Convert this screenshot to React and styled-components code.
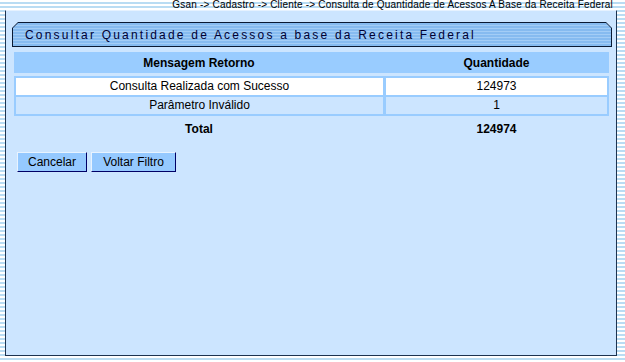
import React from "react";
import styled, { createGlobalStyle } from "styled-components";

const Global = createGlobalStyle`
  html, body {
    margin: 0;
    padding: 0;
  }
  body {
    width: 625px;
    height: 362px;
    overflow: hidden;
    font-family: "Liberation Sans", Arial, sans-serif;
    background: repeating-linear-gradient(
      to bottom,
      #ffffff 0px,
      #ffffff 2px,
      #b9dcf3 2px,
      #b9dcf3 4px
    );
  }
`;

const Trilha = styled.div`
  height: 10px;
  line-height: 10px;
  font-size: 10px;
  letter-spacing: 0.2px;
  text-align: right;
  padding-right: 12px;
  color: #000;
  white-space: nowrap;
`;

const Painel = styled.div`
  margin: 0 8px 0 5px;
  height: 346px;
  background: #cce5ff;
  border: 1px solid #1d3350;
  border-top-color: #e6f2ff;
  padding: 11px 0 0 6px;
  box-sizing: border-box;
  display: flex;
  flex-direction: column;
`;

const BarraBorda = styled.div`
  width: 600px;
  height: 25px;
  background: #0a1a33;
  clip-path: polygon(6px 0, 594px 0, 600px 6px, 600px 100%, 0 100%, 0 6px);
  padding: 1px;
  box-sizing: border-box;
`;

const Barra = styled.div`
  height: 100%;
  clip-path: polygon(5px 0, 593px 0, 598px 5px, 598px 100%, 0 100%, 0 5px);
  background: repeating-linear-gradient(
    to bottom,
    #86bbf0 0px,
    #86bbf0 2px,
    #a3cdf6 2px,
    #a3cdf6 3px
  );
  display: flex;
  align-items: center;
  padding-left: 12px;
  font-size: 12px;
  letter-spacing: 2.2px;
  color: #000033;
  white-space: nowrap;
`;

const Tabela = styled.div`
  margin: 5px 7px 0 2px;
  display: flex;
  flex-direction: column;
`;

const Linha = styled.div`
  display: grid;
  grid-template-columns: 370px 1fr;
  height: ${(p) => p.$h || 17}px;
  align-items: center;
  background: ${(p) => p.$bg || "transparent"};
  font-size: 12px;
  font-weight: ${(p) => (p.$bold ? "bold" : "normal")};
  color: #000;
  text-align: center;
`;

const Caixa = styled.div`
  margin-top: 3px;
  border: 2px solid #99ccff;
  display: flex;
  flex-direction: column;
  gap: 2px;
  background: #99ccff;
`;

const LinhaDado = styled.div`
  display: grid;
  grid-template-columns: 367px 1fr;
  column-gap: 3px;
  height: 17px;
  font-size: 12px;
  color: #000;
  text-align: center;
`;

const Celula = styled.div`
  background: ${(p) => (p.$branca ? "#ffffff" : "#cce5ff")};
  line-height: 17px;
`;

const Botoes = styled.div`
  display: flex;
  gap: 4px;
  margin: 11px 0 0 5px;
`;

const Botao = styled.button`
  width: ${(p) => p.$w}px;
  height: 20px;
  padding: 0;
  background: #95c9ff;
  border: 1px solid;
  border-color: #e8f3ff #000066 #000066 #e8f3ff;
  font-family: "Liberation Sans", Arial, sans-serif;
  font-size: 12px;
  color: #000;
`;

export default function App() {
  return (
    <>
      <Global />
      <Trilha>
        Gsan -&gt; Cadastro -&gt; Cliente -&gt; Consulta de Quantidade de
        Acessos A Base da Receita Federal
      </Trilha>
      <Painel>
        <BarraBorda>
          <Barra>Consultar Quantidade de Acessos a base da Receita Federal</Barra>
        </BarraBorda>
        <Tabela>
          <Linha $h={21} $bg="#99ccff" $bold>
            <span>Mensagem Retorno</span>
            <span>Quantidade</span>
          </Linha>
          <Caixa>
            <LinhaDado>
              <Celula $branca>Consulta Realizada com Sucesso</Celula>
              <Celula $branca>124973</Celula>
            </LinhaDado>
            <LinhaDado>
              <Celula>Parâmetro Inválido</Celula>
              <Celula>1</Celula>
            </LinhaDado>
          </Caixa>
          <Linha $h={25} $bold>
            <span>Total</span>
            <span>124974</span>
          </Linha>
        </Tabela>
        <Botoes>
          <Botao $w={70}>Cancelar</Botao>
          <Botao $w={85}>Voltar Filtro</Botao>
        </Botoes>
      </Painel>
    </>
  );
}
